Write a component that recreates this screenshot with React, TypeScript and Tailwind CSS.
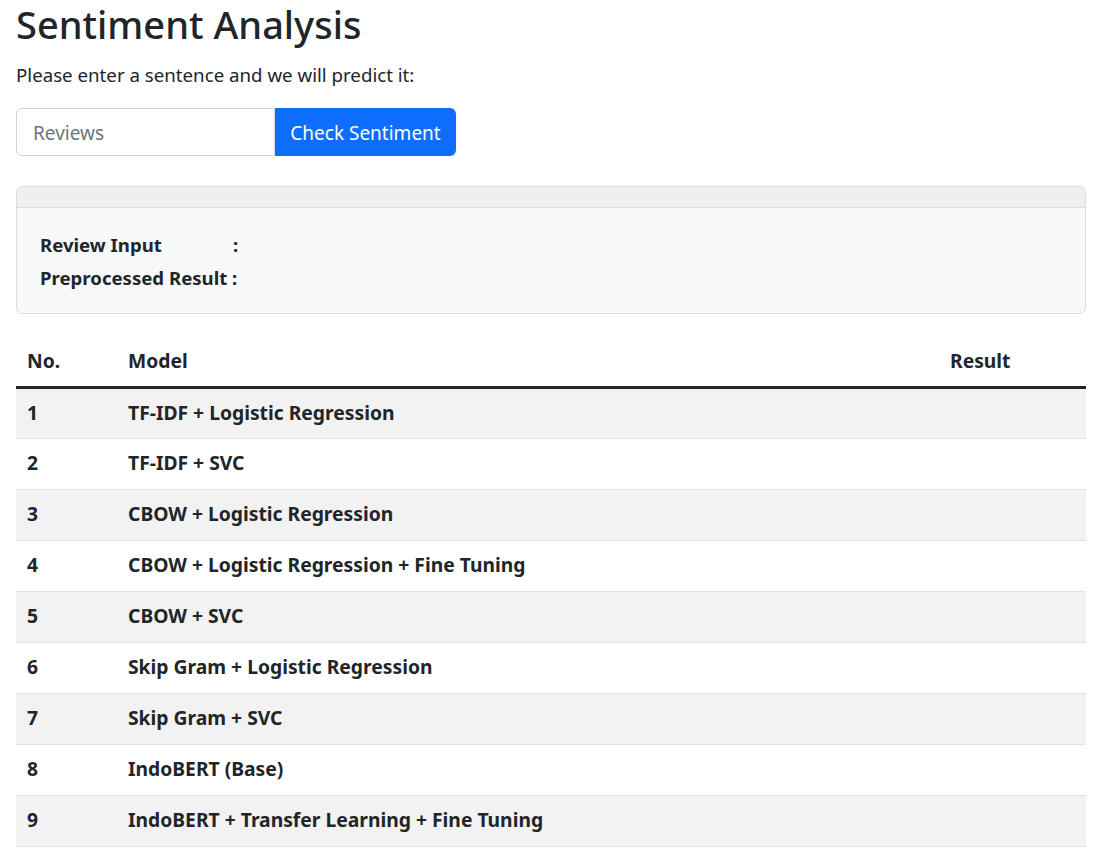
import React from 'react';

const models = [
  'TF-IDF + Logistic Regression',
  'TF-IDF + SVC',
  'CBOW + Logistic Regression',
  'CBOW + Logistic Regression + Fine Tuning',
  'CBOW + SVC',
  'Skip Gram + Logistic Regression',
  'Skip Gram + SVC',
  'IndoBERT (Base)',
  'IndoBERT + Transfer Learning + Fine Tuning',
];

export default function App() {
  return (
    <div
      className="min-h-screen bg-white pl-4 pr-[27px] text-[#212529]"
      style={{ fontFamily: '"Noto Sans", "Open Sans", sans-serif' }}
    >
      <h1 className="pt-[1px] text-[38px] font-medium leading-[46px]">Sentiment Analysis</h1>
      <p className="mt-[14px] text-[18.7px] leading-[27px]">Please enter a sentence and we will predict it:</p>

      {/* Search form */}
      <div className="mt-[20px] flex h-12">
        <input
          className="w-[259px] rounded-l-[6px] border border-[#ced4da] px-4 pt-[2px] text-[19px] text-[#212529] outline-none placeholder:text-[#6c757d]"
          placeholder="Reviews"
        />
        <button className="w-[181px] rounded-r-[6px] bg-[#0d6efd] pt-[2px] text-[19px] text-white">Check Sentiment</button>
      </div>

      {/* Result card */}
      <div className="mt-[30px] overflow-hidden rounded-[6px] border border-[#dcdddf] bg-[#f8f9fa]">
        <div className="h-[21px] border-b border-[#dcdddf] bg-[#eeeff0]" />
        <div className="px-[23px] pb-[19px] pt-[20px] text-[18.6px] font-bold leading-[33px]">
          <div className="flex">
            <span className="w-[193px]">Review Input</span>
            <span>:</span>
          </div>
          <div>Preprocessed Result :</div>
        </div>
      </div>

      {/* Models table */}
      <table className="mt-[16px] w-full border-collapse text-[19.3px] font-bold">
        <thead>
          <tr className="h-[57px] border-b-[3px] border-[#212529]">
            <th className="w-[112px] pl-[11px] pt-[7px] text-left">No.</th>
            <th className="pt-[7px] text-left">Model</th>
            <th className="w-[136px] pt-[7px] text-left">Result</th>
          </tr>
        </thead>
        <tbody>
          {models.map((m, i) => (
            <tr
              key={m}
              className={`h-[51px] border-b border-[#dee2e6] ${i % 2 === 0 ? 'bg-[#f2f2f2]' : 'bg-white'}`}
            >
              <td className="pl-[11px]">{i + 1}</td>
              <td>{m}</td>
              <td />
            </tr>
          ))}
        </tbody>
      </table>
    </div>
  );
}
